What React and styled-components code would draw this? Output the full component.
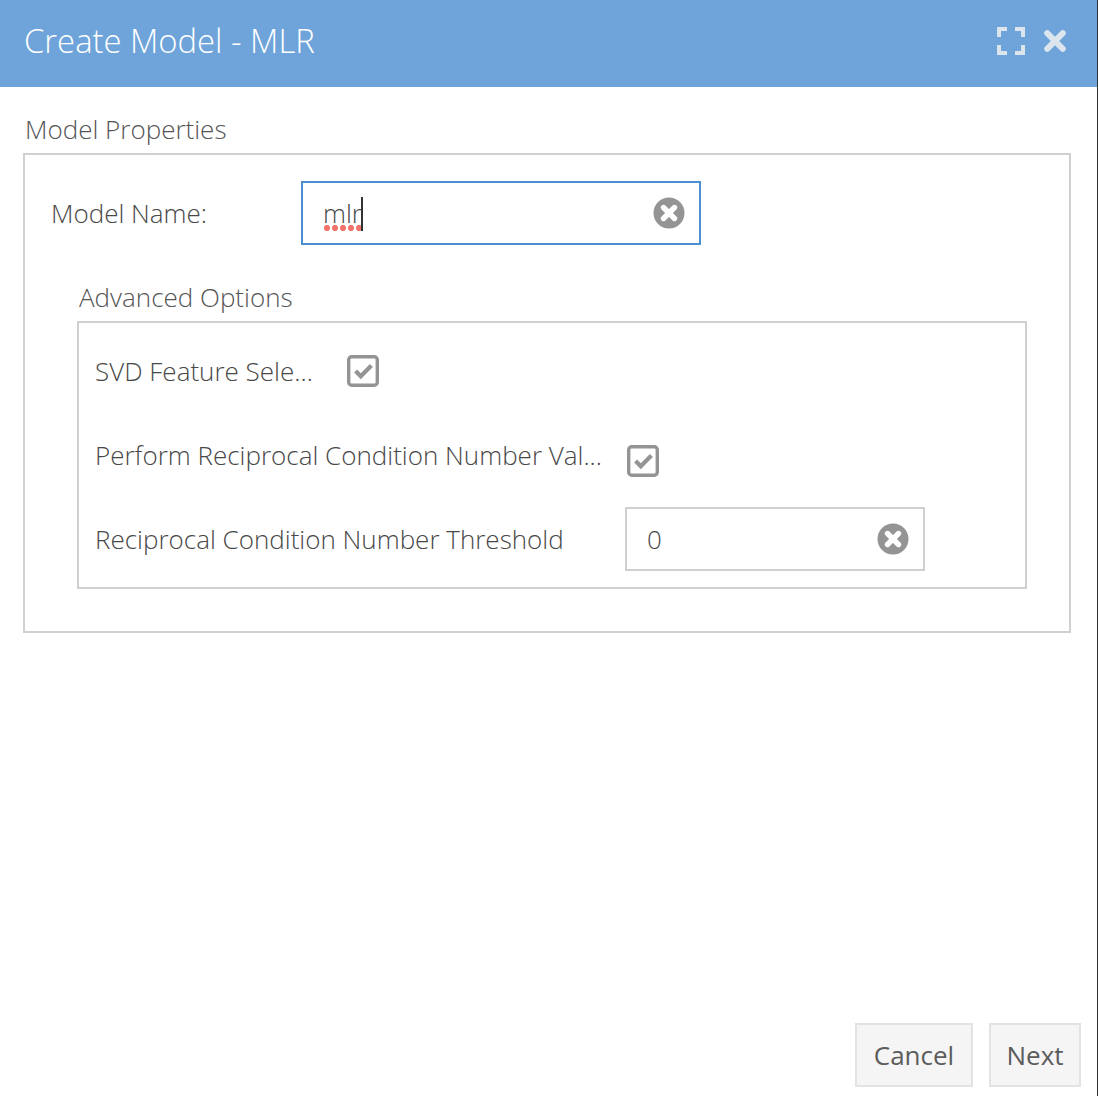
import React from "react";
import styled, { createGlobalStyle } from "styled-components";

const GlobalStyle = createGlobalStyle`
  html, body {
    margin: 0;
    padding: 0;
    background: #fff;
  }
  * {
    box-sizing: border-box;
  }
`;

function ClearIcon() {
  return (
    <ClearSvg viewBox="0 0 32 32">
      <circle cx="16" cy="16" r="15.5" fill="#949494" />
      <path d="M10.5 10.5 L21.5 21.5 M21.5 10.5 L10.5 21.5" stroke="#fff" strokeWidth="5.4" strokeLinecap="round" />
    </ClearSvg>
  );
}

function CheckBox() {
  return (
    <CheckSvg viewBox="0 0 32 32">
      <rect x="1.7" y="1.7" width="28.6" height="28.6" rx="3" fill="none" stroke="#949494" strokeWidth="3.4" />
      <path d="M8.6 16 L13.8 21.2 L24.4 10.6" fill="none" stroke="#949494" strokeWidth="4.2" />
    </CheckSvg>
  );
}

export default function App() {
  return (
    <Dialog>
      <GlobalStyle />
      <Header>
        <Title>Create Model - MLR</Title>
        <HeaderIcons>
          <svg width="28" height="28" viewBox="0 0 28 28" fill="none" stroke="#dce4ee" strokeWidth="4">
            <path d="M2 10 V2 H10 M18 2 H26 V10 M26 18 V26 H18 M10 26 H2 V18" />
          </svg>
          <svg width="22" height="22" viewBox="0 0 22 22" fill="none" stroke="#dce4ee" strokeWidth="6" strokeLinecap="round">
            <path d="M3.2 3.2 L18.8 18.8 M18.8 3.2 L3.2 18.8" />
          </svg>
        </HeaderIcons>
      </Header>
      <Body>
        <Legend>Model Properties</Legend>
        <Group>
          <NameRow>
            <Label $width={250}>Model Name:</Label>
            <Field $focused $width={400}>
              <TypedText>
                mlr
                <SpellDots />
                <Caret />
              </TypedText>
              <ClearIcon />
            </Field>
          </NameRow>
          <Advanced>
            <Legend>Advanced Options</Legend>
            <InnerGroup>
              <OptionRow $height={64}>
                <Label $width={252}>SVD Feature Sele...</Label>
                <CheckBox />
              </OptionRow>
              <OptionRow $height={104} $nudge>
                <Label $width={532}>Perform Reciprocal Condition Number Val...</Label>
                <CheckBox />
              </OptionRow>
              <OptionRow $height={64}>
                <Label $width={530}>Reciprocal Condition Number Threshold</Label>
                <Field $width={300}>
                  <TypedText>0</TypedText>
                  <ClearIcon />
                </Field>
              </OptionRow>
            </InnerGroup>
          </Advanced>
        </Group>
      </Body>
      <Footer>
        <Button $width={118}>Cancel</Button>
        <Button $width={92}>Next</Button>
      </Footer>
    </Dialog>
  );
}

const Dialog = styled.div`
  display: flex;
  flex-direction: column;
  width: 1098px;
  height: 1096px;
  overflow: hidden;
  background: #fff;
  border-right: 1px solid #333;
  font-family: "Open Sans", "Liberation Sans", sans-serif;
  font-weight: 300;
  color: #444;
`;

const Header = styled.div`
  display: flex;
  align-items: center;
  justify-content: space-between;
  flex-shrink: 0;
  height: 87px;
  padding: 0 31px 5px 24px;
  background: #6ea4da;
`;

const Title = styled.div`
  margin-top: -2px;
  font-size: 32.8px;
  color: #fff;
`;

const HeaderIcons = styled.div`
  display: flex;
  align-items: center;
  gap: 19px;
`;

const Body = styled.div`
  flex: 1;
  padding: 22px 26px 0 23px;
`;

const Legend = styled.div`
  height: 44px;
  padding-left: 2px;
  font-size: 26px;
  line-height: 40px;
  color: #555;
`;

const Group = styled.div`
  height: 480px;
  padding: 26px 42px 0 26px;
  border: 2px solid #d0d0d0;
`;

const NameRow = styled.div`
  display: flex;
  align-items: center;
  height: 64px;
`;

const Label = styled.div`
  flex-shrink: 0;
  width: ${(p) => p.$width}px;
  font-size: 26px;
  white-space: nowrap;
  color: #484848;
`;

const Field = styled.div`
  display: flex;
  align-items: center;
  justify-content: space-between;
  width: ${(p) => p.$width}px;
  height: 64px;
  padding: 0 14px 0 20px;
  border: 2px solid ${(p) => (p.$focused ? "#4a90d2" : "#d0d0d0")};
  font-size: 26px;
`;

const TypedText = styled.span`
  position: relative;
  display: inline-block;
  color: #484848;
`;

const SpellDots = styled.span`
  position: absolute;
  left: 0;
  bottom: 0;
  width: 40px;
  height: 6px;
  background: radial-gradient(circle at 50% 50%, #f4746c 2.8px, transparent 3.3px) 0 0 / 8px 6px repeat-x;
`;

const Caret = styled.span`
  position: absolute;
  top: 2px;
  right: -1px;
  width: 2px;
  height: 34px;
  background: #333;
`;

const ClearSvg = styled.svg`
  width: 32px;
  height: 32px;
  flex-shrink: 0;
`;

const CheckSvg = styled.svg`
  width: 32px;
  height: 32px;
  flex-shrink: 0;
`;

const Advanced = styled.div`
  margin: 32px 0 0 26px;
`;

const InnerGroup = styled.div`
  height: 268px;
  padding: 16px 16px 0;
  border: 2px solid #d0d0d0;
`;

const OptionRow = styled.div`
  display: flex;
  align-items: center;
  height: ${(p) => p.$height}px;
  & > svg {
    margin-top: ${(p) => (p.$nudge ? "12px" : "0")};
  }
`;

const Footer = styled.div`
  display: flex;
  justify-content: flex-end;
  gap: 16px;
  padding: 0 16px 9px 0;
`;

const Button = styled.button`
  width: ${(p) => p.$width}px;
  height: 64px;
  padding: 0;
  border: 2px solid #e3e3e3;
  background: #f5f5f5;
  font-family: inherit;
  font-weight: 400;
  font-size: 26px;
  color: #5c5c5c;
`;
